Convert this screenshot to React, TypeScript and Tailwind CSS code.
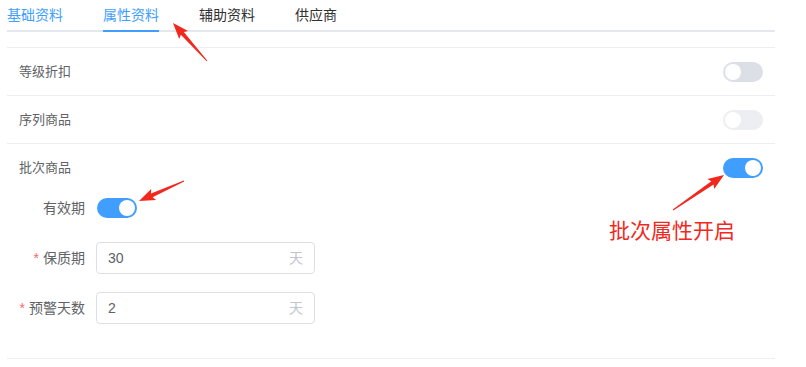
import React from "react";

const font = {
  fontFamily: '"Liberation Sans", "Noto Sans CJK SC", sans-serif',
};

const Switch = ({ on, disabled }: { on?: boolean; disabled?: boolean }) => (
  <div
    className={`relative h-5 w-10 rounded-full ${
      on ? "bg-[#409eff]" : "bg-[#dcdfe6]"
    } ${disabled ? "opacity-50" : ""}`}
  >
    <div
      className={`absolute top-[2px] h-4 w-4 rounded-full bg-white ${
        on ? "left-[22px]" : "left-[2px]"
      }`}
    />
  </div>
);

// tapered red arrow, tail -> tip
const arrowPoints = (tx: number, ty: number, hx: number, hy: number) => {
  const dx = hx - tx;
  const dy = hy - ty;
  const len = Math.hypot(dx, dy);
  const ux = dx / len;
  const uy = dy / len;
  const px = -uy;
  const py = ux;
  const headLen = 14;
  const bx = hx - ux * headLen;
  const by = hy - uy * headLen;
  const pts = [
    [tx + px * 0.5, ty + py * 0.5],
    [bx + px * 2, by + py * 2],
    [bx + px * 6 - ux * 2, by + py * 6 - uy * 2],
    [hx, hy],
    [bx - px * 6 - ux * 2, by - py * 6 - uy * 2],
    [bx - px * 2, by - py * 2],
    [tx - px * 0.5, ty - py * 0.5],
  ];
  return pts.map((p) => p.join(",")).join(" ");
};

const FieldRow = ({
  label,
  value,
  required,
}: {
  label: string;
  value: string;
  required?: boolean;
}) => (
  <div className="flex h-8 items-center">
    <div className="w-[78px] text-right text-[14px] text-[#606266]">
      {required && <span className="mr-[4px] text-[#f56c6c]">*</span>}
      {label}
    </div>
    <div className="ml-[11px] flex h-8 w-[219px] items-center justify-between rounded-[4px] border border-[#dcdfe6] px-[11px] text-[14px]">
      <span className="text-[#606266]">{value}</span>
      <span className="text-[#c0c4cc]">天</span>
    </div>
  </div>
);

const tabs = ["基础资料", "属性资料", "辅助资料", "供应商"];

export default function App() {
  return (
    <div className="relative h-[367px] w-[806px] overflow-hidden bg-white" style={font}>
      {/* tabs */}
      <div className="ml-[7px] flex h-8 w-[768px] border-b-2 border-[#e4e7ed]">
        {tabs.map((t, i) => (
          <div
            key={t}
            className={`relative h-[30px] text-[14px] leading-[30px] ${
              i === 0 ? "pr-5" : i === 3 ? "pl-5" : "px-5"
            } ${i < 2 ? "text-[#409eff]" : "text-[#303133]"}`}
          >
            {t}
            {i === 1 && (
              <div className="absolute bottom-[-2px] left-5 right-5 h-[2px] bg-[#409eff]" />
            )}
          </div>
        ))}
      </div>

      {/* form */}
      <div className="ml-[7px] mt-[15px] w-[768px]">
        <div className="flex h-[49px] items-center justify-between border-y border-[#ebeef5] pl-3 pr-3">
          <span className="text-[13px] text-[#606266]">等级折扣</span>
          <Switch />
        </div>
        <div className="flex h-[48px] items-center justify-between border-b border-[#ebeef5] pl-3 pr-3">
          <span className="text-[13px] text-[#606266]">序列商品</span>
          <Switch disabled />
        </div>
        <div className="border-b border-[#ebeef5] pb-[34px]">
          <div className="flex h-[48px] items-center justify-between pl-3 pr-3">
            <span className="text-[13px] text-[#606266]">批次商品</span>
            <Switch on />
          </div>
          <div className="flex h-8 items-center">
            <div className="w-[78px] text-right text-[14px] text-[#606266]">有效期</div>
            <div className="ml-[12px]">
              <Switch on />
            </div>
          </div>
          <div className="mt-[18px] flex flex-col gap-[18px]">
            <FieldRow label="保质期" value="30" required />
            <FieldRow label="预警天数" value="2" required />
          </div>
        </div>
      </div>

      {/* annotations */}
      <div className="absolute left-[609px] top-[217px] text-[21px] leading-[28px] text-[#f0281e]">
        批次属性开启
      </div>
      <svg className="pointer-events-none absolute left-0 top-0" width="806" height="367">
        <polygon points={arrowPoints(207, 61, 173, 23)} fill="#f0281e" />
        <polygon points={arrowPoints(184, 181, 139, 201)} fill="#f0281e" />
        <polygon points={arrowPoints(673, 210, 724, 175)} fill="#f0281e" />
      </svg>
    </div>
  );
}
